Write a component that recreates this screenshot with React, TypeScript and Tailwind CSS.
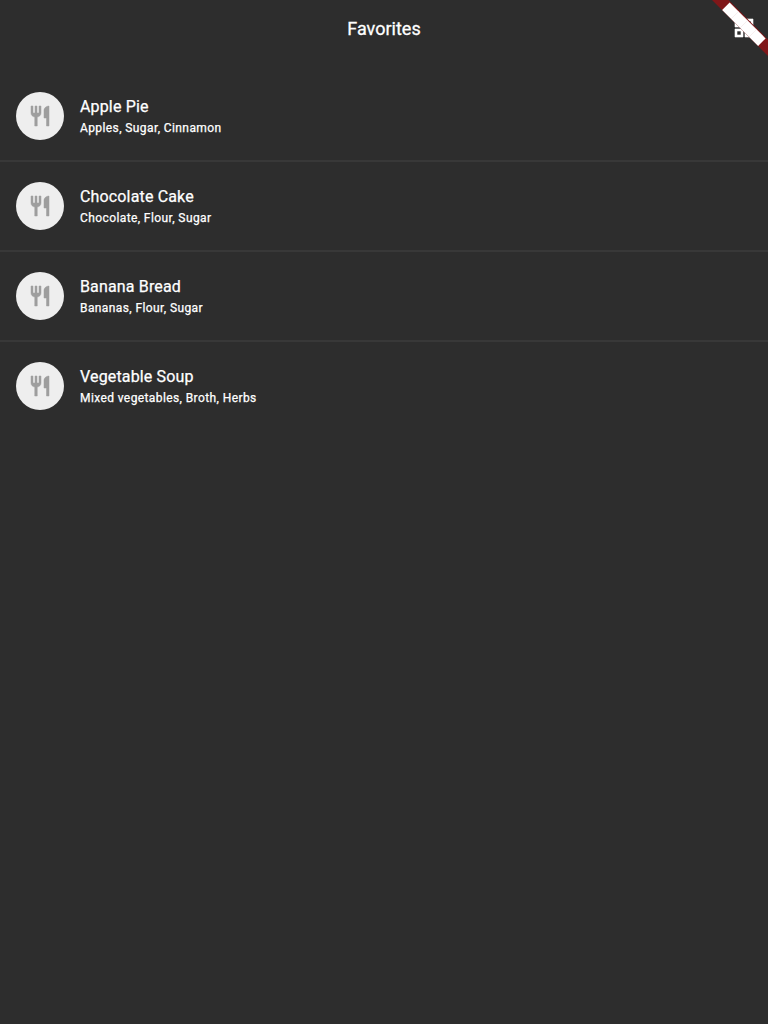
const items = [
  { name: 'Apple Pie', detail: 'Apples, Sugar, Cinnamon' },
  { name: 'Chocolate Cake', detail: 'Chocolate, Flour, Sugar' },
  { name: 'Banana Bread', detail: 'Bananas, Flour, Sugar' },
  { name: 'Vegetable Soup', detail: 'Mixed vegetables, Broth, Herbs' },
];

function RestaurantIcon() {
  return (
    <svg className="size-6" viewBox="0 0 24 24" fill="#9e9e9e" stroke="#9e9e9e" strokeWidth="0.5">
      <path d="M11 9H9V2H7v7H5V2H3v7c0 2.12 1.66 3.84 3.75 3.97V22h2.5v-9.03C11.34 12.84 13 11.12 13 9V2h-2v7zm5-3v8h2.5v8H21V2c-2.76 0-5 2.24-5 4z" />
    </svg>
  );
}

function GridIcon() {
  return (
    <svg className="size-6" viewBox="0 0 24 24" fill="#fff" fillRule="evenodd" stroke="#fff" strokeWidth="0.6">
      <path d="M3 3v8h8V3H3zm6 6H5V5h4v4zM3 13v8h8v-8H3zm6 6H5v-4h4v4zM13 3v8h8V3h-8zm6 6h-4V5h4v4zM13 13v8h8v-8h-8zm6 6h-4v-4h4v4z" />
    </svg>
  );
}

function CornerRibbon() {
  return (
    <svg className="absolute top-0 right-0 size-14" viewBox="0 0 56 56">
      <path d="M0 0H16.6L56 39.4V56Z" fill="#7f1719" />
      <path d="M17.6 2.4L53.6 38.4L46.1 45.9L10.1 9.9Z" fill="#fff" />
      <path d="M26.6 11.4L19.1 18.9M35.6 20.4L28.1 27.9M44.6 29.4L37.1 36.9" stroke="#eedfdf" strokeWidth="0.5" />
    </svg>
  );
}

export default function App() {
  return (
    <div className="relative min-h-screen overflow-hidden bg-[#2d2d2d] font-['Roboto',sans-serif] text-white">
      <header className="grid h-14 grid-cols-[1fr_auto_1fr] items-center px-3">
        <h1 className="col-start-2 pt-0.5 text-[18px] leading-6 font-normal [-webkit-text-stroke:0.3px_white]">Favorites</h1>
        <div className="justify-self-end">
          <GridIcon />
        </div>
      </header>
      <CornerRibbon />
      <ul className="pt-4">
        {items.map((item) => (
          <li key={item.name} className="group flex h-[90px] flex-col">
            <div className="flex h-[88px] items-center gap-4 px-4">
              <div className="flex size-12 items-center justify-center rounded-full bg-[#eeeeee]">
                <RestaurantIcon />
              </div>
              <div>
                <div className="text-[16px] leading-6 font-normal tracking-[0.15px] [-webkit-text-stroke:0.25px_white]">{item.name}</div>
                <div className="text-[12px] leading-[18px] font-normal tracking-[0.4px] [-webkit-text-stroke:0.25px_white]">{item.detail}</div>
              </div>
            </div>
            <div className="h-0.5 bg-[#383838] group-last:hidden" />
          </li>
        ))}
      </ul>
    </div>
  );
}
